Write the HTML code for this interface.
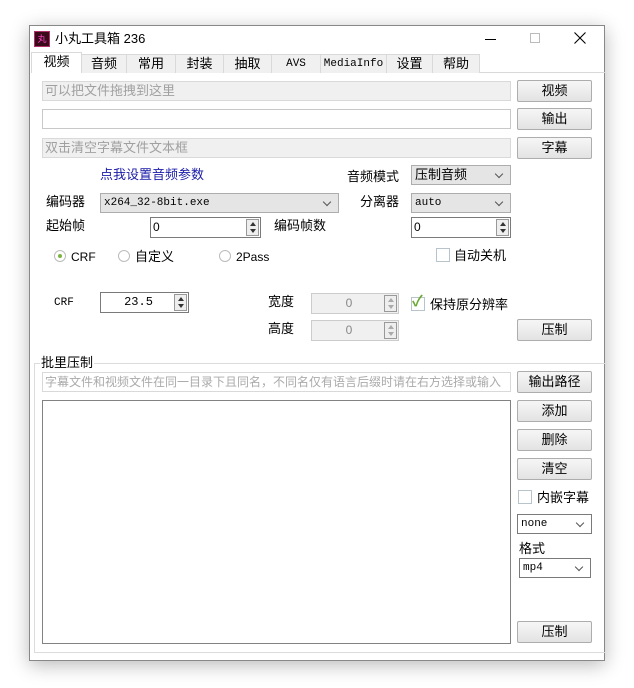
<!DOCTYPE html>
<html><head><meta charset="utf-8"><style>
*{box-sizing:border-box;margin:0;padding:0}
body{width:634px;height:688px;background:#fff;position:relative;overflow:hidden;font-family:"Liberation Sans","Noto Sans CJK SC",sans-serif;font-size:12px;color:#000}
.a{position:absolute;white-space:nowrap;line-height:16px}
.win{position:absolute;left:29px;top:25px;width:576px;height:636px;border:1px solid #888;background:#fff;box-shadow:0 4px 18px rgba(0,0,0,.28)}
.btn{position:absolute;width:75px;height:22px;border:1px solid #adadad;border-radius:2px;background:linear-gradient(#f6f6f6,#e3e3e3);text-align:center;line-height:20px;font-size:13px}
.gin{position:absolute;background:#f0f0f0;border:1px solid #d9d9d9;color:#a0a0a0;font-size:13px;line-height:18px;padding-left:2px;overflow:hidden;white-space:nowrap}
.win2{position:absolute;background:#fff;border:1px solid #c8c8c8}
.combo{position:absolute;height:20px;border:1px solid #adadad;background:#e5e5e5;font-size:12px;line-height:18px;padding-left:3px}
.combo:after{content:"";position:absolute;right:8px;top:5px;width:5px;height:5px;border-right:1px solid #555;border-bottom:1px solid #555;transform:rotate(45deg)}
.combow{background:#fff;border-color:#7a7a7a}
.mono{font-family:"Liberation Mono","DejaVu Sans Mono",monospace;font-size:11px}
.spin{position:absolute;height:21px;border:1px solid #7a7a7a;background:#fff;font-size:12px;line-height:19px;padding-left:2px}
.spin .ar{position:absolute;right:1px;top:1px;width:13px;height:17px;border:1px solid #999;background:#eee}
.spin .ar:before{content:"";position:absolute;left:3px;top:2px;border:3px solid transparent;border-bottom:4px solid #333;border-top:0}
.spin .ar:after{content:"";position:absolute;left:3px;bottom:2px;border:3px solid transparent;border-top:4px solid #333;border-bottom:0}
.dis{background:#f0f0f0;border-color:#ccc;color:#888;text-align:center}
.dis .ar:before{border-bottom-color:#aaa}.dis .ar:after{border-top-color:#aaa}
.tab{position:absolute;top:28px;height:19px;border:1px solid #d9d9d9;border-bottom:none;background:#f0f0f0;text-align:center;line-height:18px;font-size:13px}
.rad{position:absolute;width:12px;height:12px;border-radius:50%;border:1px solid #bbb;background:#fff}
.chk{position:absolute;width:14px;height:14px;border:1px solid #b8c4cc;background:#fff}
</style></head><body>
<div class="win">
 <div class="a" style="left:4px;top:5px;width:16px;height:16px;background:#3b0a1a;border:1px solid #b0306a;color:#f4c;font-size:9px;text-align:center;line-height:14px">丸</div>
 <div class="a" style="left:25px;top:5px;font-size:13px">小丸工具箱 236</div>
 <div class="a" style="left:455px;top:13px;width:11px;border-top:1px solid #000"></div>
 <div class="a" style="left:500px;top:7px;width:10px;height:10px;border:1px solid #bbb"></div>
 <svg class="a" style="left:544px;top:6px" width="12" height="12"><path d="M0.5 0.5L11.5 11.5M11.5 0.5L0.5 11.5" stroke="#000" stroke-width="1.1"/></svg>
 <div class="a" style="left:1px;top:46px;width:574px;border-top:1px solid #d9d9d9"></div>
 <div class="tab" style="left:1px;top:26px;height:21px;width:51px;background:#fff;border-color:#d9d9d9">视频</div>
 <div class="tab" style="left:51px;width:46px">音频</div>
 <div class="tab" style="left:96px;width:50px">常用</div>
 <div class="tab" style="left:145px;width:49px">封装</div>
 <div class="tab" style="left:193px;width:49px">抽取</div>
 <div class="tab mono" style="left:241px;width:50px;font-size:11px">AVS</div>
 <div class="tab mono" style="left:290px;width:67px;font-size:11px">MediaInfo</div>
 <div class="tab" style="left:356px;width:47px">设置</div>
 <div class="tab" style="left:402px;width:48px">帮助</div>
</div>
<div class="gin a" style="left:42px;top:81px;width:469px;height:20px">可以把文件拖拽到这里</div>
<div class="btn" style="left:517px;top:80px">视频</div>
<div class="win2" style="left:42px;top:109px;width:469px;height:20px"></div>
<div class="btn" style="left:517px;top:108px">输出</div>
<div class="gin a" style="left:42px;top:138px;width:469px;height:20px">双击清空字幕文件文本框</div>
<div class="btn" style="left:517px;top:137px">字幕</div>

<div class="a" style="left:100px;top:167px;color:#1a1aa8;font-size:13px">点我设置音频参数</div>
<div class="a" style="left:347px;top:169px;font-size:13px">音频模式</div>
<div class="combo" style="left:411px;top:165px;width:100px;font-size:13px">压制音频</div>
<div class="a" style="left:46px;top:194px;font-size:13px">编码器</div>
<div class="combo mono" style="left:100px;top:193px;width:239px;line-height:19px">x264_32-8bit.exe</div>
<div class="a" style="left:360px;top:194px;font-size:13px">分离器</div>
<div class="combo mono" style="left:411px;top:193px;width:100px;line-height:19px">auto</div>
<div class="a" style="left:46px;top:218px;font-size:13px">起始帧</div>
<div class="spin" style="left:150px;top:217px;width:111px">0<div class="ar"></div></div>
<div class="a" style="left:274px;top:218px;font-size:13px">编码帧数</div>
<div class="spin" style="left:411px;top:217px;width:100px">0<div class="ar"></div></div>

<div class="rad" style="left:54px;top:250px"></div><div class="a" style="left:58px;top:254px;width:4px;height:4px;border-radius:50%;background:#7cb342"></div>
<div class="a" style="left:71px;top:249px;font-size:12px">CRF</div>
<div class="rad" style="left:118px;top:250px"></div><div class="a" style="left:135px;top:249px;font-size:13px">自定义</div>
<div class="rad" style="left:219px;top:250px"></div><div class="a" style="left:236px;top:249px;font-size:12px">2Pass</div>
<div class="chk" style="left:436px;top:248px"></div><div class="a" style="left:454px;top:248px;font-size:13px">自动关机</div>

<div class="a mono" style="left:54px;top:295px">CRF</div>
<div class="spin mono" style="left:100px;top:292px;width:89px;text-align:center;padding-right:14px;font-size:12px">23.5<div class="ar"></div></div>
<div class="a" style="left:268px;top:294px;font-size:13px">宽度</div>
<div class="spin dis" style="left:311px;top:293px;width:88px;padding-right:14px">0<div class="ar"></div></div>
<div class="chk" style="left:411px;top:297px"></div><div class="a" style="left:412px;top:294px;color:#6aa832;font-size:15px;font-weight:bold">✓</div>
<div class="a" style="left:430px;top:297px;font-size:13px">保持原分辨率</div>
<div class="a" style="left:268px;top:321px;font-size:13px">高度</div>
<div class="spin dis" style="left:311px;top:320px;width:88px;padding-right:14px">0<div class="ar"></div></div>
<div class="btn" style="left:517px;top:319px">压制</div>

<div class="a" style="left:34px;top:363px;width:571px;height:290px;border:1px solid #dcdcdc;border-right:none"></div>
<div class="a" style="left:40px;top:355px;background:#fff;padding:0 1px;font-size:13px">批里压制</div>
<div class="gin a" style="left:42px;top:372px;width:469px;height:20px;background:#fff;color:#aaa;font-size:12px;line-height:18px">字幕文件和视频文件在同一目录下且同名，不同名仅有语言后缀时请在右方选择或输入</div>
<div class="btn" style="left:517px;top:371px">输出路径</div>
<div class="a" style="left:42px;top:400px;width:469px;height:244px;border:1px solid #828282;background:#fff"></div>
<div class="btn" style="left:517px;top:400px">添加</div>
<div class="btn" style="left:517px;top:429px">删除</div>
<div class="btn" style="left:517px;top:458px">清空</div>
<div class="chk" style="left:518px;top:490px"></div><div class="a" style="left:537px;top:490px;font-size:13px">内嵌字幕</div>
<div class="combo combow mono" style="left:517px;top:514px;width:75px">none</div>
<div class="a" style="left:519px;top:541px;font-size:13px">格式</div>
<div class="combo combow mono" style="left:519px;top:558px;width:72px">mp4</div>
<div class="btn" style="left:517px;top:621px">压制</div>
</body></html>
